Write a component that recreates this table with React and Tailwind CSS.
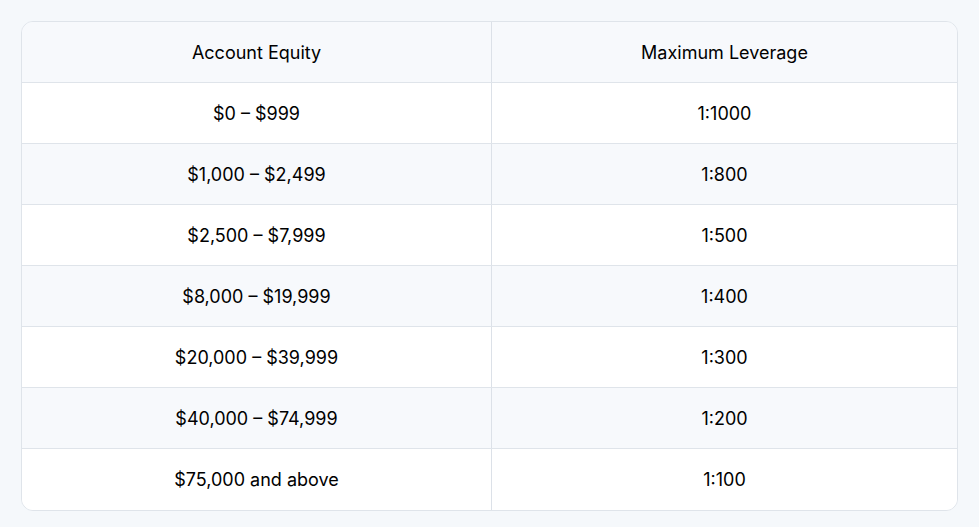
import React from 'react';

const rows = [
  ['$0 – $999', '1:1000'],
  ['$1,000 – $2,499', '1:800'],
  ['$2,500 – $7,999', '1:500'],
  ['$8,000 – $19,999', '1:400'],
  ['$20,000 – $39,999', '1:300'],
  ['$40,000 – $74,999', '1:200'],
  ['$75,000 and above', '1:100'],
];

const Row = ({ left, right, striped, last }) => (
  <div
    className={`grid grid-cols-[470px_1fr] h-[61px] ${last ? '' : 'border-b border-[#dfe4ea]'} ${
      striped ? 'bg-[#f7f9fc]' : 'bg-white'
    }`}
  >
    <div className="flex items-center justify-center border-r border-[#dce1e8]">{left}</div>
    <div className="flex items-center justify-center">{right}</div>
  </div>
);

export default function App() {
  return (
    <div
      className="min-h-screen bg-[#f5f8fb] p-[21px] text-[18px] text-black"
      style={{ fontFamily: 'Inter, "Noto Sans", sans-serif' }}
    >
      <div className="w-[937px] rounded-xl border border-[#dfe4ea] overflow-hidden">
        <Row left="Account Equity" right="Maximum Leverage" striped />
        {rows.map(([l, r], i) => (
          <Row key={i} left={l} right={r} striped={i % 2 === 1} last={i === rows.length - 1} />
        ))}
      </div>
    </div>
  );
}
